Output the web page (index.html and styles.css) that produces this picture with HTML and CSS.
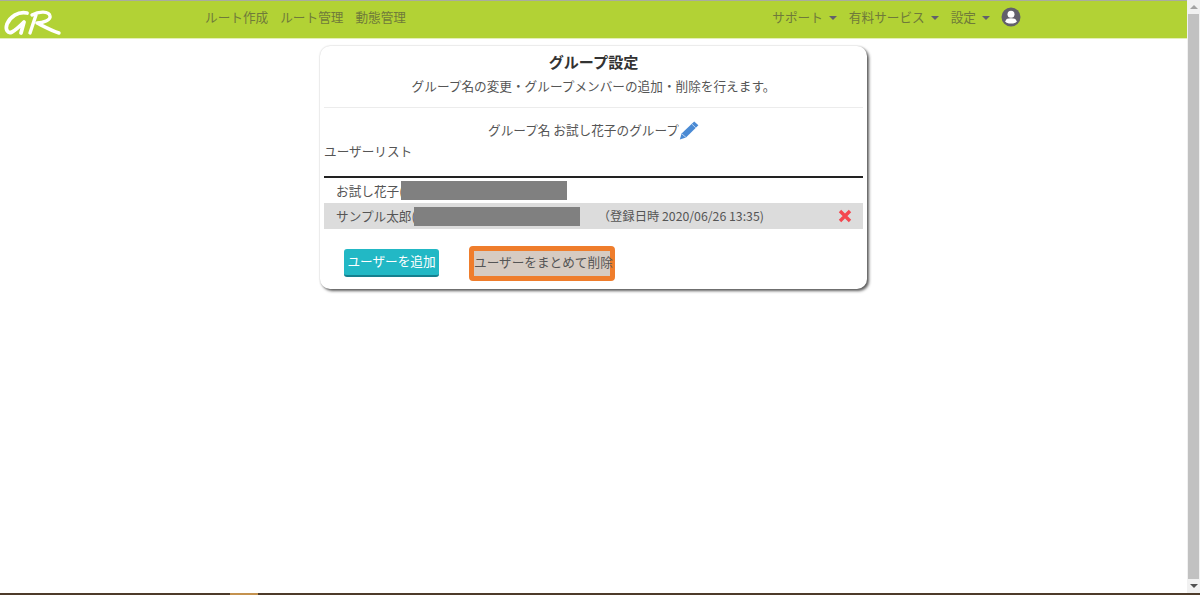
FILE: index.html
```html
<!DOCTYPE html>
<html lang="ja">
<head>
    <meta charset="UTF-8">
    <meta name="viewport" content="width=device-width, initial-scale=1.0">
    <title>グループ設定</title>
    <link rel="stylesheet" href="styles.css">
</head>
<body>
    <div id="window">
        <div id="main">
            <div id="page">
                <nav id="navbar">
                    <a class="logo" href="#">
                        <svg width="62" height="36" viewBox="0 0 62 36" fill="none" stroke="#fff" stroke-linecap="round" stroke-linejoin="round">
                            <path stroke-width="3.8" d="M27 11 C18 9 10 15 7 22 C5 28 8 32 12 30 C16 28 20 24 24 20 L21 31"/>
                            <path stroke-width="3.4" d="M30 31 L36 13 M32 13 C39 9 49 9 50 14 C51 18 43 21 37 21 C43 24 52 29 59 31"/>
                        </svg>
                    </a>
                    <ul class="nav-left">
                        <li>ルート作成</li>
                        <li>ルート管理</li>
                        <li>動態管理</li>
                    </ul>
                    <ul class="nav-right">
                        <li class="dropdown">サポート</li>
                        <li class="dropdown">有料サービス</li>
                        <li class="dropdown">設定</li>
                        <li class="user-icon">
                            <svg width="20" height="20" viewBox="0 0 20 20">
                                <circle cx="10" cy="10" r="9.5" fill="#62606b"/>
                                <circle cx="10" cy="7.2" r="3.5" fill="#fff"/>
                                <path fill="#fff" d="M4.4 14.2 C4.8 11.8 7 11.2 10 11.2 C13 11.2 15.2 11.8 15.6 14.2 C15 16 13 16.6 10 16.6 C7 16.6 5 16 4.4 14.2 Z"/>
                            </svg>
                        </li>
                    </ul>
                </nav>

                <div id="container">
                    <div class="card-head">
                        <h1>グループ設定</h1>
                        <p>グループ名の変更・グループメンバーの追加・削除を行えます。</p>
                    </div>

                    <div class="group-name">
                        グループ名 お試し花子のグループ
                        <svg class="pencil" width="20" height="19" viewBox="0 0 20 19">
                            <path fill="#4a8ad4" d="M15.2 0.4 L19.4 4.2 L7 16.4 L0.8 18.6 L2.6 12.6 Z"/>
                            <path fill="none" stroke="#d6e5f6" stroke-width="0.8" d="M12.8 3 L16.8 6.8 M3 13 L7 16.4"/>
                        </svg>
                    </div>
                    <div class="list-label">ユーザーリスト</div>

                    <div class="user-list">
                        <div class="user-row first">
                            <span class="user-name">お試し花子(<span class="masked"></span></span>
                        </div>
                        <div class="user-row shaded">
                            <span class="user-name">サンプル太郎(<span class="masked"></span></span>
                            <span class="user-date">（登録日時 2020/06/26 13:35)</span>
                            <svg class="delete-icon" width="14" height="14" viewBox="0 0 14 14">
                                <path stroke="#f4474f" stroke-width="3.4" d="M2 2 L12 12 M12 2 L2 12"/>
                            </svg>
                        </div>
                    </div>

                    <div class="actions">
                        <button class="btn-add" type="button">ユーザーを追加</button>
                        <span class="highlight"><button class="btn-remove" type="button">ユーザーをまとめて削除</button></span>
                    </div>
                </div>
            </div>

            <div id="scrollbar">
                <div class="arrow up"></div>
                <div class="thumb"></div>
                <div class="arrow down"></div>
            </div>
        </div>
        <div id="taskbar"><span class="task-active"></span></div>
    </div>
</body>
</html>
```

FILE: styles.css
```css
html, body {
    margin: 0;
    padding: 0;
    height: 100%;
    overflow: hidden;
}

body {
    background-color: #ffffff;
    color: #555555;
    font-family: "Noto Sans CJK JP", "Noto Sans", sans-serif;
    font-size: 12.65px;
}

#window {
    height: 595px;
    display: flex;
    flex-direction: column;
}

#main {
    flex: 1;
    display: flex;
    min-height: 0;
}

#page {
    flex: 1;
    min-width: 0;
}

/* navbar */
#navbar {
    height: 37px;
    border-top: 1px solid #a9ac9f;
    border-bottom: 1px solid #e4efb8;
    background-color: #b2d235;
    display: flex;
    align-items: center;
    color: #6f7a3a;
}

.logo {
    width: 205px;
    height: 36px;
    display: block;
}

#navbar ul {
    list-style: none;
    margin: 0;
    padding: 0 0 6px 0;
    display: flex;
    align-items: center;
}

.nav-left {
    gap: 12px;
}

.nav-right {
    margin-left: auto !important;
    margin-right: 166px !important;
    gap: 12px;
}

.dropdown::after {
    content: "";
    display: inline-block;
    margin-left: 6px;
    vertical-align: 2px;
    border-top: 4px solid #62606b;
    border-left: 4px solid transparent;
    border-right: 4px solid transparent;
}

.user-icon {
    height: 20px;
    margin-left: -1px;
}

/* card */
#container {
    width: 547px;
    height: 243px;
    box-sizing: border-box;
    margin: 7px 0 0 320px;
    padding: 0 4px;
    background-color: #ffffff;
    border-radius: 10px;
    box-shadow: 2px 2px 3px rgba(40, 40, 40, 0.75), 0 0 2px rgba(0, 0, 0, 0.2);
}

.card-head {
    height: 61px;
    border-bottom: 1px solid #ececec;
    text-align: center;
}

.card-head h1 {
    margin: 0;
    padding-top: 5px;
    height: 25px;
    line-height: 21px;
    font-size: 15.1px;
    font-weight: bold;
    color: #333333;
}

.card-head p {
    margin: 0;
    line-height: 20px;
}

.group-name {
    height: 33px;
    display: flex;
    justify-content: center;
    align-items: center;
    padding: 9px 0 0 0;
    box-sizing: border-box;
}

.pencil {
    margin-top: 3px;
}

.list-label {
    height: 20px;
    line-height: 20px;
}

.user-list {
    margin-top: 15px;
    border-top: 2px solid #222222;
    width: 539px;
}

.user-row {
    height: 26px;
    line-height: 26px;
    padding-left: 12px;
    display: flex;
    align-items: center;
}

.user-row.first {
    height: 25px;
}

.user-row.shaded {
    background-color: #dcdcdc;
}

.user-name {
    display: flex;
    align-items: center;
}

.masked {
    width: 166px;
    height: 19px;
    margin-left: -2px;
    background-color: #808080;
}

.user-date {
    margin-left: 18px;
    font-size: 12.3px;
}

.delete-icon {
    margin-left: auto;
    margin-right: 11px;
}

.actions {
    display: flex;
    align-items: center;
    margin-top: 17px;
    padding-left: 20px;
}

.btn-add {
    width: 95px;
    height: 28px;
    margin-bottom: 2px;
    padding: 0 0 2px 0;
    border: none;
    border-bottom: 2px solid #14808f;
    border-radius: 3px;
    background-color: #22b8c5;
    color: #ffffff;
    font-family: inherit;
    font-size: 12.65px;
}

.highlight {
    margin-left: 30px;
    border: 5px solid #ef7d2c;
    border-radius: 4px;
    display: block;
}

.btn-remove {
    display: block;
    width: 136px;
    height: 25px;
    padding: 0 0 4px 0;
    border: none;
    background-color: #d6cbc2;
    color: #555555;
    font-family: inherit;
    font-size: 12.65px;
    white-space: nowrap;
}

/* window chrome */
#scrollbar {
    width: 13px;
    background-color: #f1f1f1;
    display: flex;
    flex-direction: column;
    align-items: center;
}

.arrow {
    height: 14px;
    display: flex;
    align-items: center;
}

.arrow::before {
    content: "";
    border-left: 4px solid transparent;
    border-right: 4px solid transparent;
}

.arrow.up::before {
    border-bottom: 4px solid #a3a3a3;
}

.arrow.down::before {
    border-top: 4px solid #505050;
}

.thumb {
    flex: 1;
    width: 11px;
    background-color: #c1c1c1;
}

#taskbar {
    height: 2px;
    background-color: #4d3b2a;
    padding-left: 230px;
}

.task-active {
    display: block;
    width: 28px;
    height: 2px;
    background-color: #c4924f;
}
```
